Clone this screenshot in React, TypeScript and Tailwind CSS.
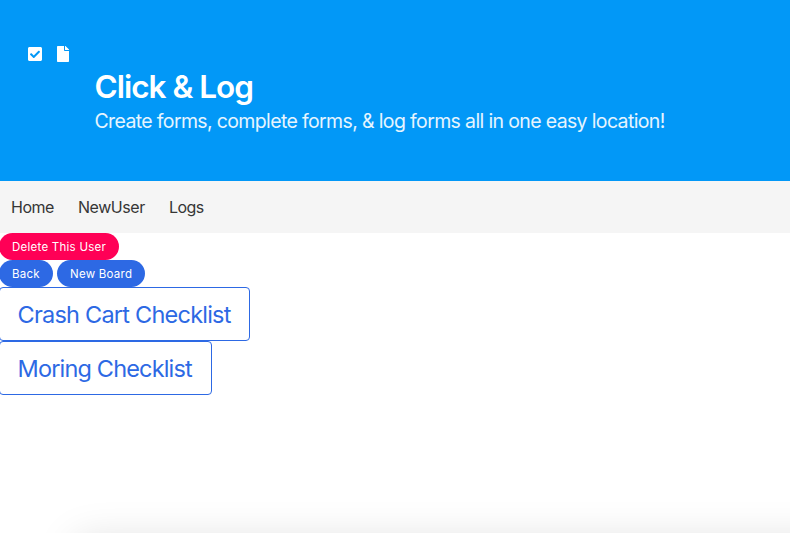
import { FaCheckSquare, FaFile } from "react-icons/fa";

const navLinks = [
  { label: "Home", style: "w-[43px] tracking-[-0.5px]" },
  { label: "NewUser", style: "w-[67px] tracking-[-0.45px]" },
  { label: "Logs", style: "w-[35px] tracking-[-0.55px]" },
];

const boards = [
  { name: "Crash Cart Checklist", style: "w-[251px] tracking-[-0.77px]" },
  { name: "Moring Checklist", style: "w-[213px] tracking-[-0.83px]" },
];

const pill =
  "flex h-[27px] items-center rounded-[14px] pt-[2px] pl-[13px] text-[11.5px] whitespace-nowrap text-white";

export default function App() {
  return (
    <div className="relative h-[533px] w-full overflow-hidden bg-white font-['Inter','Liberation_Sans',sans-serif]">
      <header className="h-[181px] bg-[#0298f7] pt-[46px] text-white">
        <div className="flex gap-3 pl-[27px] text-[16px]">
          <FaCheckSquare />
          <FaFile />
        </div>
        <div className="pl-[94.5px] whitespace-nowrap">
          <h1 className="mt-[5px] text-[31.5px] leading-[40px] font-semibold tracking-[-1px]">
            Click &amp; Log
          </h1>
          <p className="text-[19.5px] leading-[28px] tracking-[-0.64px] text-white/90">
            Create forms, complete forms, &amp; log forms all in one easy location!
          </p>
        </div>
      </header>
      <nav className="flex h-[52px] items-center gap-6 bg-[#f5f5f5] pl-[11px] text-[16px] text-[#363636]">
        {navLinks.map((link) => (
          <a key={link.label} className={`whitespace-nowrap ${link.style}`}>
            {link.label}
          </a>
        ))}
      </nav>
      <main className="-ml-px flex flex-col items-start">
        <button className={`${pill} w-[120px] bg-[#ff0056] tracking-[0.25px]`}>Delete This User</button>
        <div className="flex gap-1">
          <button className={`${pill} w-[54px] bg-[#2d69e4] tracking-[0.25px]`}>Back</button>
          <button className={`${pill} w-[88px] bg-[#2d69e4] tracking-[0.25px]`}>New Board</button>
        </div>
        {boards.map((board) => (
          <button
            key={board.name}
            className={`flex h-[54px] items-center rounded-[4px] border border-[#2d69e4] bg-white pt-[2px] pl-[17.5px] text-[23.5px] whitespace-nowrap text-[#2d69e4] ${board.style}`}
          >
            {board.name}
          </button>
        ))}
      </main>
      <div className="absolute top-[539px] -right-[60px] left-[74px] h-[60px] rounded-[10px] shadow-[0_0_40px_rgba(0,0,0,0.13)]" />
    </div>
  );
}
